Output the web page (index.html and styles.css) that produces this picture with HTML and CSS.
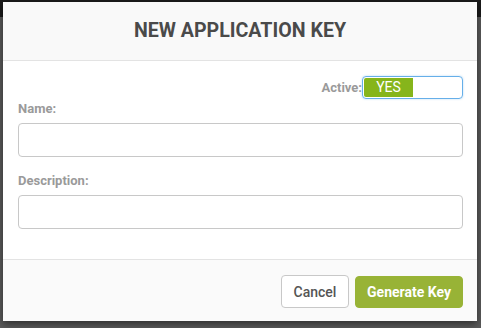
FILE: index.html
```html
<!DOCTYPE html>
<html>
<head>
<meta charset="utf-8">
<link rel="stylesheet" href="styles.css">
</head>
<body>
<div class="modal">
  <div class="modal-header"><h1 class="title">NEW APPLICATION KEY</h1></div>
  <div class="modal-body">
    <div class="active-row">
      <span class="active-label">Active:</span>
      <div class="toggle"><span class="toggle-on">YES</span><span class="toggle-off"></span></div>
    </div>
    <div class="group group-name">
      <label class="field-label">Name:</label>
      <div class="input"></div>
    </div>
    <div class="group">
      <label class="field-label">Description:</label>
      <div class="input"></div>
    </div>
  </div>
  <div class="modal-footer">
    <button class="btn btn-cancel">Cancel</button>
    <button class="btn btn-primary">Generate Key</button>
  </div>
</div>
</body>
</html>
```
FILE: styles.css
```css
html, body { margin: 0; padding: 0; }
body {
  width: 481px;
  height: 328px;
  overflow: hidden;
  background: linear-gradient(to bottom, #1b1b1b 0, #1b1b1b 17px, #5b5b5b 17px, #5b5b5b 100%);
  font-family: Roboto, "Liberation Sans", sans-serif;
}
.modal {
  margin: 2px 0 0 3px;
  width: 474px;
  height: 319px;
  background: #fff;
  display: flex;
  flex-direction: column;
  box-shadow: 0 3px 8px rgba(0,0,0,0.5);
}
.modal-header {
  height: 58px;
  background: #f9f9f9;
  border-bottom: 1px solid #e3e3e3;
  display: flex;
  align-items: center;
  justify-content: center;
}
.title {
  margin: 0;
  font-size: 19.6px;
  font-weight: 700;
  color: #4a4a4a;
  line-height: 22px;
}
.modal-body {
  height: 198px;
  box-sizing: border-box;
  padding: 15px 14px 0 15px;
}
.active-row {
  height: 24px;
  display: flex;
  justify-content: flex-end;
  align-items: flex-start;
}
.active-label {
  font-size: 13px;
  font-weight: 700;
  color: #9a9a9a;
  line-height: 23px;
}
.toggle {
  width: 101px;
  height: 23px;
  box-sizing: border-box;
  border: 1px solid #66afe9;
  border-radius: 4px;
  padding: 1px;
  display: flex;
  box-shadow: 0 0 2px rgba(102,175,233,0.5);
}
.toggle-on {
  width: 49px;
  background: #86b51b;
  color: #fff;
  font-size: 14px;
  line-height: 19px;
  text-align: center;
  border-radius: 2px 0 0 2px;
}
.toggle-off { flex: 1; }
.group-name { margin-bottom: 15px; }
.field-label {
  display: block;
  font-size: 13px;
  font-weight: 700;
  color: #9a9a9a;
  line-height: 18px;
  margin-bottom: 5px;
}
.input {
  height: 34px;
  box-sizing: border-box;
  border: 1px solid #c8c8c8;
  border-radius: 4px;
  background: #fff;
}
.modal-footer {
  flex: 1;
  background: #fafafa;
  border-top: 1px solid #e3e3e3;
  display: flex;
  justify-content: flex-end;
  align-items: flex-start;
  padding: 15px 14px 0 0;
  gap: 6px;
}
.btn {
  height: 33px;
  border-radius: 4px;
  font-family: Roboto, "Liberation Sans", sans-serif;
  font-size: 14px;
  font-weight: 500;
  padding: 0;
  margin: 0;
  white-space: nowrap;
  text-align: center;
  cursor: pointer;
}
.btn-cancel {
  width: 68px;
  background: #fff;
  border: 1px solid #c8c8c8;
  color: #555;
}
.btn-primary {
  width: 108px;
  height: 32px;
  margin-top: 1px;
  background: #98b336;
  border: 1px solid #98b336;
  color: #fff;
  font-weight: 700;
}
```
